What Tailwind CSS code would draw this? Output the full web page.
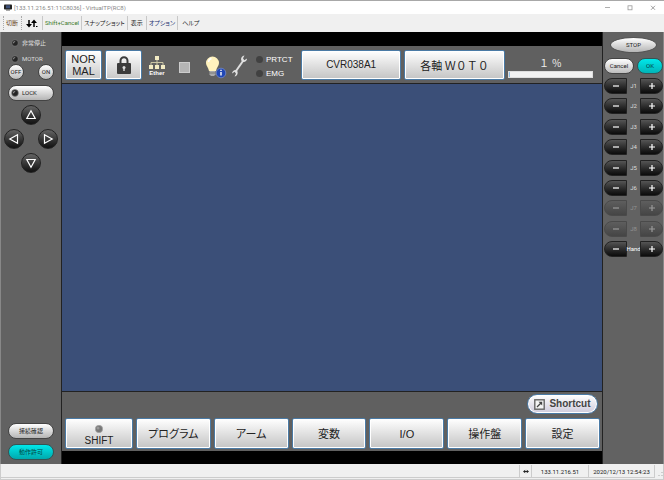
<!DOCTYPE html>
<html lang="ja">
<head>
<meta charset="utf-8">
<meta name="viewport" content="width=device-width, initial-scale=1">
<title>VirtualTP(RC8)</title>
<script src="https://cdn.jsdelivr.net/npm/@tailwindcss/browser@4"></script>
</head>
<body class="flex h-screen flex-col overflow-hidden bg-[#f0f0f0] font-['Liberation_Sans','Noto_Sans_CJK_JP',sans-serif] text-[#222]">

<header class="flex h-[14px] shrink-0 items-center border-t border-[#a8a8a8] bg-white pr-2 pl-1 font-['Roboto',sans-serif] text-[6px] leading-[8px] text-[#888]">
  <svg class="mr-[2px] h-[7px] w-[8px]" viewBox="0 0 8 7"><rect x="0" y="0.5" width="8" height="5" rx=".8" fill="#222"/><rect x="2" y="1.3" width="4" height="3" fill="#3b4f78"/><rect x="2" y="5.5" width="4" height="1" fill="#555"/></svg>
  <h1>[133.11.216.51:11C8036] - VirtualTP(RC8)</h1>
  <div class="ml-auto flex items-center gap-[17px]">
    <button aria-label="最小化"><svg class="h-[6px] w-[5px]" viewBox="0 0 5 6"><path d="M0 2.5H5" stroke="#999" stroke-width=".8"/></svg></button>
    <button aria-label="最大化"><svg class="h-[6px] w-[6px]" viewBox="0 0 6 6"><rect x="1" y=".8" width="4" height="4" fill="none" stroke="#999" stroke-width=".8"/></svg></button>
    <button aria-label="閉じる"><svg class="h-[6px] w-[6px]" viewBox="0 0 6 6"><path d="M1 .8L5 4.8M5 .8L1 4.8" stroke="#888" stroke-width=".8"/></svg></button>
  </div>
</header>

<nav class="flex h-[18px] shrink-0 items-center pl-[3px] font-['Roboto','Noto_Sans_CJK_JP',sans-serif] text-[6px] leading-[8px] whitespace-nowrap [font-feature-settings:'palt']">
  <div class="flex h-[14px] items-center divide-x divide-[#c8c8c8]">
    <button class="h-full border-l border-dotted border-[#aaa] pr-[3px] pl-[2px] text-[#642]">切断</button>
    <button class="h-full px-[4px]" aria-label="転送"><svg class="h-[9px] w-[12px]" viewBox="0 0 12 9"><path d="M3 1V7M8 8V2" stroke="#000" stroke-width="1.5"/><path d="M0 5H6L3 8.5ZM5 4H11L8 .5Z" fill="#000"/><path d="M10 7.5h1.5" stroke="#000"/></svg></button>
    <button class="h-full px-[2px] text-[#3d7a2c]">Shift+Cancel</button>
    <button class="h-full px-[2px]">スナップショット</button>
    <button class="h-full px-[3px]">表示</button>
    <button class="h-full px-[2px] text-[#223070]">オプション</button>
    <button class="h-full pl-[4px]">ヘルプ</button>
  </div>
</nav>

<main class="flex min-h-0 flex-1 border-x border-[#888] bg-[#626262]">

  <aside class="flex w-[60px] shrink-0 flex-col px-[7px] pt-[6px] pb-[4px] text-[6px] leading-[8px]">
    <div class="flex h-[10px] items-center gap-[3px] pl-[3px] text-[#ddd]">
      <svg class="size-[8px]" viewBox="0 0 8 8"><circle cx="4" cy="4" r="3.3" fill="#252525" stroke="#888" stroke-width=".6"/><path d="M2 4Q2 2 4.500 2L2.500 4.500Z" fill="#999"/></svg>
      <span>非常停止</span>
    </div>
    <div class="mt-[6px] flex h-[10px] items-center gap-[3px] pl-[3px] text-[#ddd]">
      <svg class="size-[8px]" viewBox="0 0 8 8"><circle cx="4" cy="4" r="3.3" fill="#252525" stroke="#888" stroke-width=".6"/><path d="M2 4Q2 2 4.500 2L2.500 4.500Z" fill="#999"/></svg>
      <span class="font-['Roboto',sans-serif]">MOTOR</span>
    </div>
    <div class="flex justify-between">
      <button class="size-[16px] rounded-full border border-[#444] bg-linear-to-b from-white to-[#bdbdbd] text-center font-['Roboto',sans-serif]">OFF</button>
      <button class="size-[16px] rounded-full border border-[#444] bg-linear-to-b from-white to-[#bdbdbd] text-center font-['Roboto',sans-serif]">ON</button>
    </div>
    <button class="mt-[5px] flex h-[16px] items-center gap-[3px] rounded-full border border-[#444] bg-linear-to-b from-white to-[#b5b5b5] pl-[2px] font-['Roboto',sans-serif]">
      <svg class="size-[8px]" viewBox="0 0 8 8"><circle cx="4" cy="4" r="3.4" fill="#252525" stroke="#888" stroke-width=".6"/><path d="M2 4Q2 2 4.500 2L2.500 4.500Z" fill="#aaa"/></svg>
      LOCK
    </button>
    <div class="-mx-[4px] mt-[4px] flex flex-col items-center gap-[4px]">
      <button aria-label="上" class="grid size-[20px] place-items-center rounded-full border border-[#222] bg-linear-to-b from-[#666] to-[#111]"><svg class="size-[12px]" viewBox="0 0 12 12"><path d="M6 1.800L10.200 9.500H1.800Z" fill="none" stroke="#fff" stroke-width="1.2"/></svg></button>
      <div class="flex justify-between self-stretch">
        <button aria-label="左" class="grid size-[20px] place-items-center rounded-full border border-[#222] bg-linear-to-b from-[#666] to-[#111]"><svg class="size-[12px]" viewBox="0 0 12 12"><path d="M1.800 6L9.500 1.800V10.200Z" fill="none" stroke="#fff" stroke-width="1.2"/></svg></button>
        <button aria-label="右" class="grid size-[20px] place-items-center rounded-full border border-[#222] bg-linear-to-b from-[#666] to-[#111]"><svg class="size-[12px]" viewBox="0 0 12 12"><path d="M10.200 6L2.500 1.800V10.200Z" fill="none" stroke="#fff" stroke-width="1.2"/></svg></button>
      </div>
      <button aria-label="下" class="grid size-[20px] place-items-center rounded-full border border-[#222] bg-linear-to-b from-[#666] to-[#111]"><svg class="size-[12px]" viewBox="0 0 12 12"><path d="M6 10.200L10.200 2.500H1.800Z" fill="none" stroke="#fff" stroke-width="1.2"/></svg></button>
    </div>
    <div class="mt-auto flex flex-col gap-[5px]">
      <button class="h-[16px] rounded-full border border-[#444] bg-linear-to-b from-white to-[#b5b5b5]">接続確認</button>
      <button class="h-[16px] rounded-full border border-[#355] bg-linear-to-b from-[#00e8ea] to-[#00a9ad] text-[#044]">動作許可</button>
    </div>
  </aside>

  <section class="flex min-w-0 flex-1 flex-col border-x border-[#222] bg-black pt-[14px] pb-[13px]">
    <div class="flex h-[38px] shrink-0 items-center border-b border-[#222] bg-[#606060] pr-[9px] pl-[3px]">
      <button class="h-[30px] w-[37px] rounded-xs border border-[#4a7aa5] bg-linear-to-b from-white to-[#c8c8c8] text-[11px] leading-[12px] shadow-[inset_0_0_0_1px_#fff]"><span class="block">NOR</span><span class="block">MAL</span></button>
      <button aria-label="ロック" class="ml-[3px] grid h-[30px] w-[37px] place-items-center rounded-xs border border-[#4a7aa5] bg-linear-to-b from-white to-[#c8c8c8] shadow-[inset_0_0_0_1px_#fff]">
        <svg class="h-[18px] w-[14px]" viewBox="0 0 14 18"><path d="M3.500 8V4.800a3.500 3.500 0 0 1 7 0V8" fill="none" stroke="#3c3c3c" stroke-width="2"/><rect x="0" y="7" width="14" height="11" rx="1" fill="#3c3c3c"/><circle cx="7" cy="11.500" r="1.500" fill="#ddd"/><path d="M6.300 12h1.400v3H6.300z" fill="#ddd"/></svg>
      </button>
      <div class="mt-[3px] ml-[5px] flex w-[20px] flex-col items-center text-[6px] leading-[7px] font-bold text-white">
        <svg class="h-[15px] w-[18px]" viewBox="0 0 18 15"><path d="M9 4V11M3 11V7.500H15V11" fill="none" stroke="#c9c4a4" stroke-width="1"/><g fill="#f2ebc4"><rect x="7" y="1" width="4" height="4"/><rect x="1" y="10" width="4" height="4"/><rect x="7" y="10" width="4" height="4"/><rect x="13" y="10" width="4" height="4"/></g></svg>
        <span>Ether</span>
      </div>
      <span class="mt-[5px] ml-[12px] size-[11px] border border-[#ccc] bg-[#b4b4b4]"></span>
      <svg class="mt-[4px] ml-[15px] h-[24px] w-[22px]" viewBox="0 0 22 24"><path d="M1 8a6.500 6.500 0 0 1 13 0c0 3-2.500 4.500-3 8H4C3.500 12.500 1 11 1 8Z" fill="#fff2bd"/><path d="M3.500 7a4 4 0 0 1 3-3.500" fill="none" stroke="#fff" stroke-width="1.500"/><path d="M4.500 16h6v3.500L9 21H6l-1.500-1.500Z" fill="#aaa"/><path d="M4.500 18h6" stroke="#666" stroke-width=".7"/><circle cx="16" cy="18" r="4.800" fill="#2148b5" stroke="#7c92cf" stroke-width=".7"/><path d="M16 17v3.500M16 14.800v1.200" stroke="#fff" stroke-width="1.400"/></svg>
      <svg class="mt-[2px] ml-[4px] h-[24px] w-[18px]" viewBox="0 0 18 24"><path d="M5 17L12 7" stroke="#ddd" stroke-width="2"/><path d="M13.500 1.500C10.500 2 9 5 11 7.500C13 9 16 7.500 16 4.500L13.300 6.200L12 4.300Z" fill="#e2e2e2"/><path d="M3.500 22.500C6.500 22 7.500 19 6 16.500C4 15 1.500 16.500 1 19.500L3.700 17.800L5 19.700Z" fill="#e2e2e2"/></svg>
      <div class="ml-[7px] flex w-[38px] flex-col gap-[4px] pt-[4px] text-[8px] leading-[10px] text-white">
        <div class="flex items-center gap-[3px]"><span class="size-[7px] shrink-0 rounded-full bg-[#414141]"></span>PRTCT</div>
        <div class="flex items-center gap-[3px]"><span class="size-[7px] shrink-0 rounded-full bg-[#414141]"></span>EMG</div>
      </div>
      <button class="ml-[7px] h-[30px] flex-[99] rounded-xs border border-[#4a7aa5] bg-linear-to-b from-white to-[#c4c4c4] text-[10px] leading-[14px] shadow-[inset_0_0_0_1px_#fff]">CVR038A1</button>
      <button class="ml-[3px] h-[30px] flex-[99] rounded-xs border border-[#4a7aa5] bg-linear-to-b from-white to-[#c4c4c4] font-['Noto_Sans_CJK_JP',sans-serif] text-[11px] leading-[14px] whitespace-nowrap shadow-[inset_0_0_0_1px_#fff]">各軸 Ｗ０Ｔ０</button>
      <div class="ml-[3px] flex flex-[86] flex-col pt-[5px] text-center text-[10px] leading-[14px] text-[#eee]">
        <span id="speed">１ ％</span>
        <div role="progressbar" aria-labelledby="speed" aria-valuenow="1" class="h-[7px] border border-[#ddd] bg-[#f1f1f1]"><div class="h-full bg-[#92c0e8]" style="width:2%"></div></div>
      </div>
    </div>

    <div class="flex-1 border-b border-[#222] bg-[#3b4f78]"></div>

    <div class="flex h-[59px] shrink-0 flex-col bg-[#606060] pr-[2px] pb-[2px] pl-[3px]">
      <div class="flex justify-end pt-[2px] pr-[2px]">
        <button class="flex h-[20px] w-[71px] items-center justify-center gap-[4px] rounded-full border border-[#4a7aa5] bg-linear-to-b from-white to-[#cfcbdc] text-[10px] leading-[12px] font-bold text-[#444] shadow-[inset_0_0_0_1px_#fff]">
          <svg class="size-[11px] shrink-0" viewBox="0 0 11 11"><rect x=".8" y=".8" width="9.400" height="9.400" fill="#f4f4f4" stroke="#666" stroke-width="1.400"/><path d="M3 8L7 4" stroke="#444" stroke-width="1.200"/><path d="M4.500 2.800H8.200V6.500Z" fill="#444"/></svg>
          Shortcut</button>
      </div>
      <div class="mt-auto grid h-[31px] grid-cols-[68fr_75fr_75fr_75fr_75fr_75fr_75fr] gap-[3px] font-['Liberation_Sans','Noto_Sans_CJK_JP',sans-serif] text-[11px] leading-[12px] whitespace-nowrap [font-feature-settings:'palt']">
        <button class="flex flex-col items-center justify-end rounded-xs border border-[#4a7aa5] bg-linear-to-b from-white to-[#c4c4c4] pb-px text-[10px] shadow-[inset_0_0_0_1px_#fff]"><svg class="mb-[2px] size-[8px]" viewBox="0 0 8 8"><circle cx="4" cy="4" r="3.700" fill="#777" stroke="#aaa" stroke-width=".6"/><circle cx="3" cy="3" r="1.500" fill="#999"/></svg>SHIFT</button>
        <button class="rounded-xs border border-[#4a7aa5] bg-linear-to-b from-white to-[#c4c4c4] shadow-[inset_0_0_0_1px_#fff]">プログラム</button>
        <button class="rounded-xs border border-[#4a7aa5] bg-linear-to-b from-white to-[#c4c4c4] shadow-[inset_0_0_0_1px_#fff]">アーム</button>
        <button class="rounded-xs border border-[#4a7aa5] bg-linear-to-b from-white to-[#c4c4c4] shadow-[inset_0_0_0_1px_#fff]">変数</button>
        <button class="rounded-xs border border-[#4a7aa5] bg-linear-to-b from-white to-[#c4c4c4] shadow-[inset_0_0_0_1px_#fff]">I/O</button>
        <button class="rounded-xs border border-[#4a7aa5] bg-linear-to-b from-white to-[#c4c4c4] shadow-[inset_0_0_0_1px_#fff]">操作盤</button>
        <button class="rounded-xs border border-[#4a7aa5] bg-linear-to-b from-white to-[#c4c4c4] shadow-[inset_0_0_0_1px_#fff]">設定</button>
      </div>
    </div>
  </section>

  <aside class="flex w-[60px] shrink-0 flex-col pt-[5px] pl-px font-['Roboto',sans-serif] text-[6px] leading-[8px]">
    <button class="mx-auto h-[16px] w-[47px] rounded-[50%] border border-[#555] bg-linear-to-b from-white to-[#b5b5b5]">STOP</button>
    <div class="mt-[5px] flex justify-between gap-[3px]">
      <button class="h-[16px] w-[30px] rounded-full border border-[#444] bg-linear-to-b from-white to-[#bdbdbd]">Cancel</button>
      <button class="h-[16px] w-[26px] rounded-full border border-[#355] bg-linear-to-b from-[#00e8ea] to-[#00b4b8] text-[#044]">OK</button>
    </div>
    <div class="mt-[4px] flex h-[179px] flex-col justify-between text-[#ddd]">
      <div class="flex items-center justify-between"><button aria-label="J1 −" class="grid h-[16px] w-[23px] place-items-center rounded-l-full border border-[#222] bg-linear-to-b from-[#555] to-[#0c0c0c]"><svg class="size-[8px]" viewBox="0 0 8 8"><path d="M1 4H7" stroke="#fff" stroke-width="1.200"/></svg></button><span>J1</span><button aria-label="J1 +" class="grid h-[16px] w-[23px] place-items-center rounded-r-full border border-[#222] bg-linear-to-b from-[#555] to-[#0c0c0c]"><svg class="size-[8px]" viewBox="0 0 8 8"><path d="M1 4H7M4 1V7" stroke="#fff" stroke-width="1.200"/></svg></button></div>
      <div class="flex items-center justify-between"><button aria-label="J2 −" class="grid h-[16px] w-[23px] place-items-center rounded-l-full border border-[#222] bg-linear-to-b from-[#555] to-[#0c0c0c]"><svg class="size-[8px]" viewBox="0 0 8 8"><path d="M1 4H7" stroke="#fff" stroke-width="1.200"/></svg></button><span>J2</span><button aria-label="J2 +" class="grid h-[16px] w-[23px] place-items-center rounded-r-full border border-[#222] bg-linear-to-b from-[#555] to-[#0c0c0c]"><svg class="size-[8px]" viewBox="0 0 8 8"><path d="M1 4H7M4 1V7" stroke="#fff" stroke-width="1.200"/></svg></button></div>
      <div class="flex items-center justify-between"><button aria-label="J3 −" class="grid h-[16px] w-[23px] place-items-center rounded-l-full border border-[#222] bg-linear-to-b from-[#555] to-[#0c0c0c]"><svg class="size-[8px]" viewBox="0 0 8 8"><path d="M1 4H7" stroke="#fff" stroke-width="1.200"/></svg></button><span>J3</span><button aria-label="J3 +" class="grid h-[16px] w-[23px] place-items-center rounded-r-full border border-[#222] bg-linear-to-b from-[#555] to-[#0c0c0c]"><svg class="size-[8px]" viewBox="0 0 8 8"><path d="M1 4H7M4 1V7" stroke="#fff" stroke-width="1.200"/></svg></button></div>
      <div class="flex items-center justify-between"><button aria-label="J4 −" class="grid h-[16px] w-[23px] place-items-center rounded-l-full border border-[#222] bg-linear-to-b from-[#555] to-[#0c0c0c]"><svg class="size-[8px]" viewBox="0 0 8 8"><path d="M1 4H7" stroke="#fff" stroke-width="1.200"/></svg></button><span>J4</span><button aria-label="J4 +" class="grid h-[16px] w-[23px] place-items-center rounded-r-full border border-[#222] bg-linear-to-b from-[#555] to-[#0c0c0c]"><svg class="size-[8px]" viewBox="0 0 8 8"><path d="M1 4H7M4 1V7" stroke="#fff" stroke-width="1.200"/></svg></button></div>
      <div class="flex items-center justify-between"><button aria-label="J5 −" class="grid h-[16px] w-[23px] place-items-center rounded-l-full border border-[#222] bg-linear-to-b from-[#555] to-[#0c0c0c]"><svg class="size-[8px]" viewBox="0 0 8 8"><path d="M1 4H7" stroke="#fff" stroke-width="1.200"/></svg></button><span>J5</span><button aria-label="J5 +" class="grid h-[16px] w-[23px] place-items-center rounded-r-full border border-[#222] bg-linear-to-b from-[#555] to-[#0c0c0c]"><svg class="size-[8px]" viewBox="0 0 8 8"><path d="M1 4H7M4 1V7" stroke="#fff" stroke-width="1.200"/></svg></button></div>
      <div class="flex items-center justify-between"><button aria-label="J6 −" class="grid h-[16px] w-[23px] place-items-center rounded-l-full border border-[#222] bg-linear-to-b from-[#555] to-[#0c0c0c]"><svg class="size-[8px]" viewBox="0 0 8 8"><path d="M1 4H7" stroke="#fff" stroke-width="1.200"/></svg></button><span>J6</span><button aria-label="J6 +" class="grid h-[16px] w-[23px] place-items-center rounded-r-full border border-[#222] bg-linear-to-b from-[#555] to-[#0c0c0c]"><svg class="size-[8px]" viewBox="0 0 8 8"><path d="M1 4H7M4 1V7" stroke="#fff" stroke-width="1.200"/></svg></button></div>
      <div class="flex items-center justify-between text-[#929292]"><button disabled aria-label="J7 −" class="grid h-[16px] w-[23px] place-items-center rounded-l-full border border-[#4a4a4a] bg-linear-to-b from-[#5e5e5e] to-[#454545]"><svg class="size-[8px]" viewBox="0 0 8 8"><path d="M1 4H7" stroke="#999" stroke-width="1.200"/></svg></button><span>J7</span><button disabled aria-label="J7 +" class="grid h-[16px] w-[23px] place-items-center rounded-r-full border border-[#4a4a4a] bg-linear-to-b from-[#5e5e5e] to-[#454545]"><svg class="size-[8px]" viewBox="0 0 8 8"><path d="M1 4H7M4 1V7" stroke="#999" stroke-width="1.200"/></svg></button></div>
      <div class="flex items-center justify-between text-[#929292]"><button disabled aria-label="J8 −" class="grid h-[16px] w-[23px] place-items-center rounded-l-full border border-[#4a4a4a] bg-linear-to-b from-[#5e5e5e] to-[#454545]"><svg class="size-[8px]" viewBox="0 0 8 8"><path d="M1 4H7" stroke="#999" stroke-width="1.200"/></svg></button><span>J8</span><button disabled aria-label="J8 +" class="grid h-[16px] w-[23px] place-items-center rounded-r-full border border-[#4a4a4a] bg-linear-to-b from-[#5e5e5e] to-[#454545]"><svg class="size-[8px]" viewBox="0 0 8 8"><path d="M1 4H7M4 1V7" stroke="#999" stroke-width="1.200"/></svg></button></div>
      <div class="flex items-center justify-between"><button aria-label="Hand −" class="grid h-[16px] w-[23px] shrink-0 place-items-center rounded-l-full border border-[#222] bg-linear-to-b from-[#555] to-[#0c0c0c]"><svg class="size-[8px]" viewBox="0 0 8 8"><path d="M1 4H7" stroke="#fff" stroke-width="1.200"/></svg></button><span class="flex w-[13px] justify-center text-white">Hand</span><button aria-label="Hand +" class="grid h-[16px] w-[23px] shrink-0 place-items-center rounded-r-full border border-[#222] bg-linear-to-b from-[#555] to-[#0c0c0c]"><svg class="size-[8px]" viewBox="0 0 8 8"><path d="M1 4H7M4 1V7" stroke="#fff" stroke-width="1.200"/></svg></button></div>
    </div>
  </aside>
</main>

<footer class="flex h-[16px] shrink-0 items-start border-x border-b border-[#ccc] bg-[#f0f0f0] pt-px font-['Roboto',sans-serif] text-[6px] leading-[14px]">
  <div class="h-[13px] flex-1 border-r border-b border-[#ccc]"></div>
  <div class="grid h-[13px] w-[12px] place-items-center border-r border-b border-[#ccc]"><svg class="h-[5px] w-[6px]" viewBox="0 0 6 5"><path d="M0 2.500L2.200 .7V4.300ZM6 2.500L3.800 .7V4.300Z" fill="#222"/><path d="M1 2.500H5" stroke="#222"/></svg></div>
  <div class="h-[13px] w-[57px] border-r border-b border-[#ccc] text-center">133.11.216.51</div>
  <div class="h-[13px] w-[66px] border-r border-b border-[#ccc] text-center">2020/12/13 12:54:23</div>
  <svg class="ml-[2px] h-[13px] w-[6px]" viewBox="0 0 6 13"><path d="M5 7v1M5 10v1M2 10v1" stroke="#aaa"/></svg>
</footer>
</body>
</html>
